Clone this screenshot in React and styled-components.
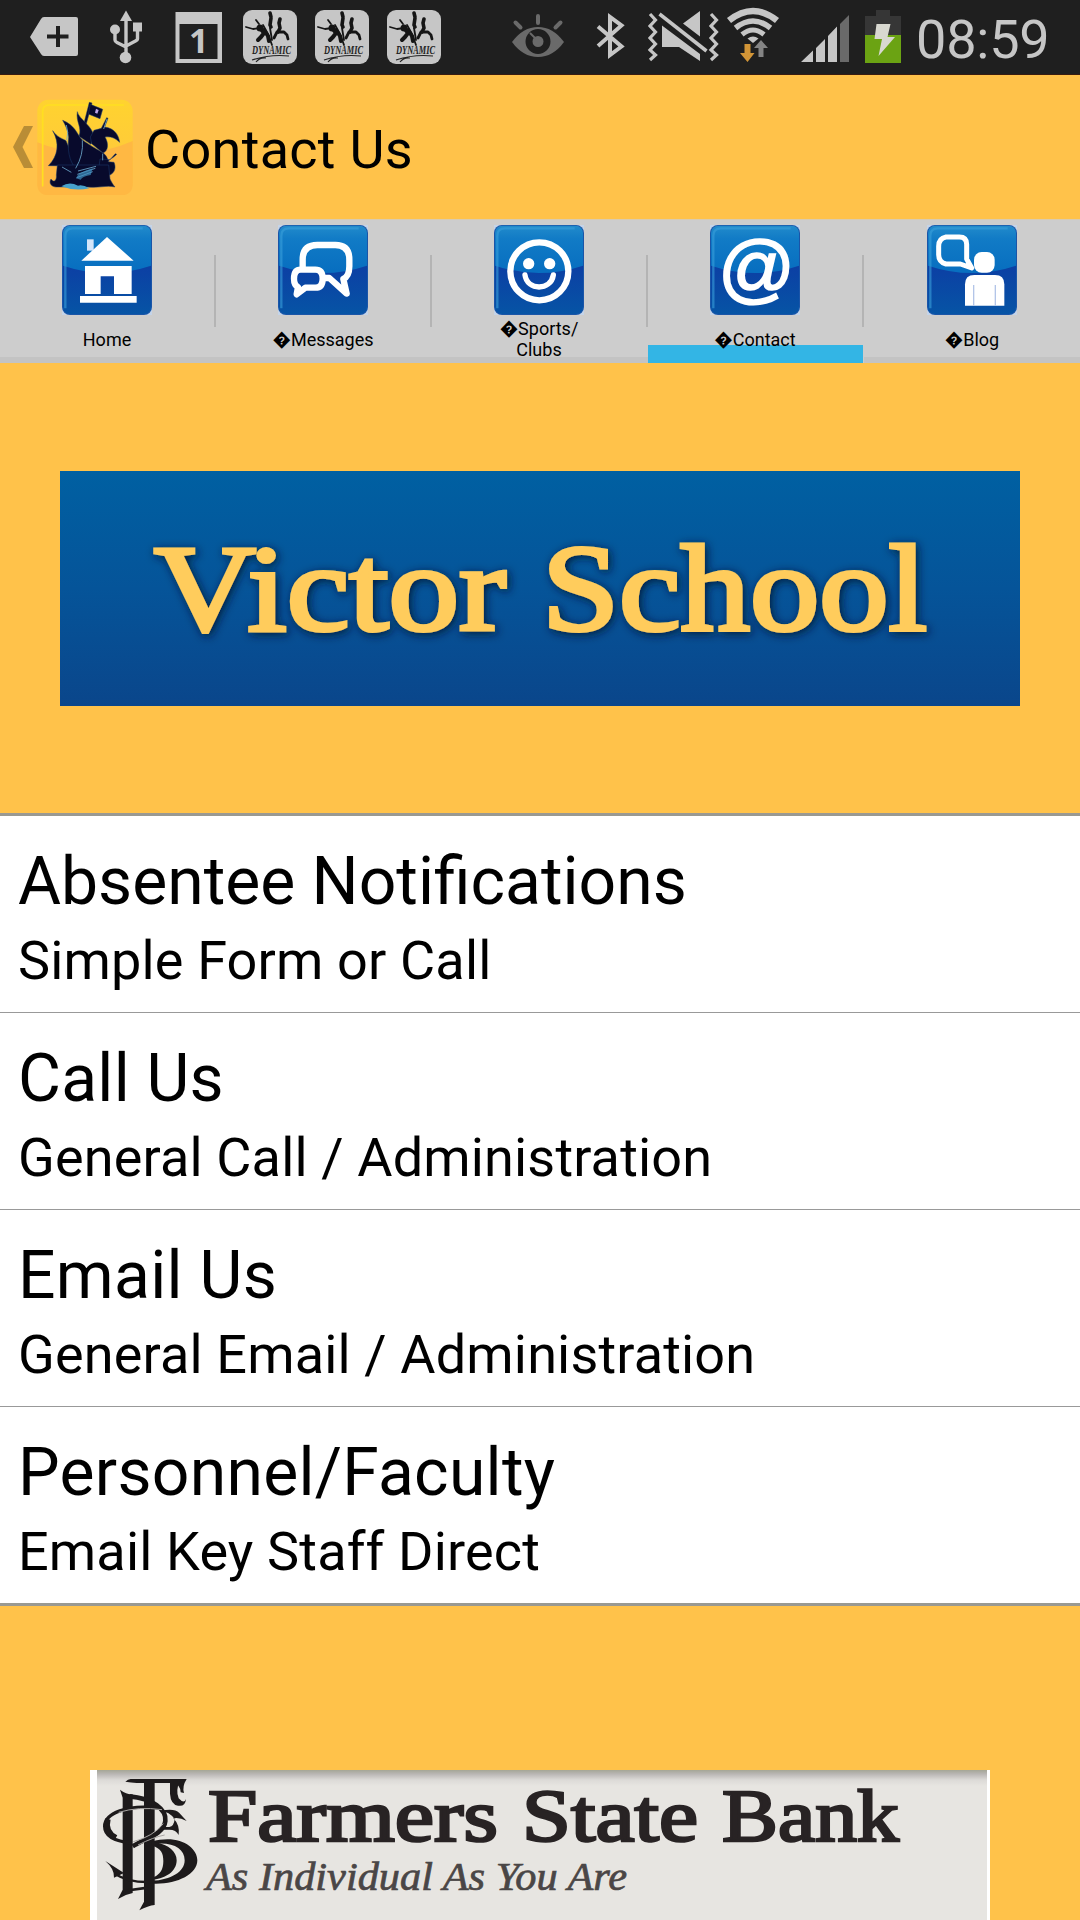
import React from "react";
import styled, { createGlobalStyle } from "styled-components";

const GlobalStyle = createGlobalStyle`
  * {
    box-sizing: border-box;
  }
  body {
    margin: 0;
    background: #ffc24a;
    font-family: Roboto, "Open Sans", sans-serif;
    color: #000;
  }
`;

const Screen = styled.div`
  width: 1080px;
  height: 1920px;
  overflow: hidden;
  display: flex;
  flex-direction: column;
  background: #ffc24a;
`;

const StatusBar = styled.header`
  height: 75px;
  flex: none;
  display: flex;
  justify-content: space-between;
  background: #1f1f1f;
  border-bottom: 1px solid #3a1c10;
`;

const StatusGroup = styled.div`
  display: flex;
  padding: ${(props) => props.$padding};
`;

const StatusIcon = styled.svg`
  display: block;
  overflow: visible;
  height: 74px;
  width: ${(props) => props.$width}px;
  margin-left: ${(props) => props.$gap || 0}px;
`;

const Clock = styled.span`
  width: 132px;
  margin-left: 15px;
  font-size: 54px;
  line-height: 79px;
  letter-spacing: -0.2px;
  white-space: nowrap;
  color: #c6c6c6;
`;

const ActionBar = styled.div`
  height: 144px;
  flex: none;
  display: flex;
  align-items: center;
  padding-left: 13px;
`;

const BackArrow = styled.svg`
  width: 20px;
  height: 42px;
  margin-right: 4px;
`;

const AppIcon = styled.svg`
  width: 96px;
  height: 96px;
  margin-right: 12px;
`;

const PageTitle = styled.h1`
  margin: 0;
  font-size: 54px;
  font-weight: 400;
  line-height: 64px;
  letter-spacing: 0.3px;
  padding-top: 5px;
`;

const TabBar = styled.nav`
  height: 144px;
  flex: none;
  display: grid;
  grid-template-columns: repeat(5, 216px);
  background: #cdcdcd;
  border-top: 1px solid #d9cbb0;
`;

const Tab = styled.div`
  height: 143px;
  display: flex;
  flex-direction: column;
  align-items: center;
  padding: 5px ${(props) => (props.$last ? 0 : 2)}px 0 0;
  background-image: ${(props) =>
      props.$active
        ? "linear-gradient(#33b5e5, #33b5e5)"
        : "linear-gradient(#c3c3c3, #c3c3c3)"},
    ${(props) =>
      props.$last ? "none" : "linear-gradient(#b4b4b4, #b4b4b4)"};
  background-repeat: no-repeat;
  background-size: ${(props) => (props.$active ? "215px 18px" : "100% 6px")},
    2px 72px;
  background-position: 0 100%, 214px 35px;
`;

const TabIcon = styled.svg`
  width: 90px;
  height: 90px;
  flex: none;
  overflow: visible;
`;

const TabLabel = styled.div`
  height: 48px;
  display: flex;
  align-items: center;
  text-align: center;
  font-size: 18px;
  line-height: 21px;
  white-space: pre-line;
`;

const BannerArea = styled.section`
  height: 450px;
  flex: none;
  display: flex;
  align-items: center;
  justify-content: center;
`;

const Banner = styled.svg`
  width: 960px;
  height: 235px;
  background: linear-gradient(#0060a2, #055499 50%, #0a468b);
`;

const List = styled.ul`
  margin: 0;
  padding: 0;
  flex: none;
  list-style: none;
  background: #fff;
  border-top: 3px solid #999992;
  border-bottom: 3px solid #999992;
`;

const ListItem = styled.li`
  height: 197px;
  padding: 27px 18px 0;
  border-bottom: 1px solid #999;

  &:last-child {
    height: 196px;
    border-bottom: none;
  }
`;

const ItemTitle = styled.div`
  font-size: 66px;
  line-height: 78px;
  letter-spacing: ${(props) => props.$spacing || "normal"};
`;

const ItemText = styled.div`
  font-size: 54px;
  line-height: 64px;
  letter-spacing: 0.16px;
  margin-top: 8px;
`;

const SponsorArea = styled.section`
  flex: 1;
  padding: 164px 90px 0;
`;

const Sponsor = styled.div`
  height: 150px;
  border-left: 7px solid #fff;
  border-right: 3px solid #fff;
  background: linear-gradient(
    #a5a696,
    #b9b6b4 4px,
    #dcdad7 10px,
    #e7e5e1 16px
  );
`;

const SponsorLogo = styled.svg`
  display: block;
  width: 890px;
  height: 150px;
`;

// the "fi" ligature is lost with any letter spacing, so the first title has none
const items = [
  { title: "Absentee Notifications", text: "Simple Form or Call" },
  { title: "Call Us", text: "General Call / Administration", spacing: "0.25px" },
  { title: "Email Us", text: "General Email / Administration", spacing: "0.3px" },
  { title: "Personnel/Faculty", text: "Email Key Staff Direct", spacing: "0.28px" },
];

const DynamicIcon = ({ gap }) => (
  <StatusIcon viewBox="0 0 54 74" $width={54} $gap={gap}>
    <rect y="10" width="54" height="54" rx="9" fill="#c6c6c6" />
    <g fill="none" stroke="#151515" strokeLinecap="round" strokeLinejoin="round">
      <path d="M3 27l7 2 7-1M13 20l3 4" strokeWidth="1.800" />
      <path d="M18 29l3 4-3 4-3 3M21 30l4 6 1 5" strokeWidth="4" />
      <path d="M20 25l5 9 4 11" strokeWidth="1.800" />
      <path d="M27 13l1 4M28 18l-1 7 1 2" strokeWidth="3.600" />
      <path d="M27 28l1 6 1 6" strokeWidth="1.800" />
      <path d="M37 19l-1 4 1 5-2 4" strokeWidth="3.600" />
      <path d="M35 32l6 0 3 3 1 4M34 32l-3 6" strokeWidth="2.800" />
    </g>
    <circle cx="17" cy="28" r="3.500" fill="#151515" />
    <text
      x="9"
      y="54"
      fontFamily="Liberation Serif"
      fontStyle="italic"
      fontWeight="700"
      fontSize="13"
      textLength="39"
      lengthAdjust="spacingAndGlyphs"
      fill="#222"
    >
      DYNAMIC
    </text>
    <path d="M9 60q18-6 37-4M13 62q4-5 10-4" fill="none" stroke="#222" strokeWidth="1.200" />
  </StatusIcon>
);

const LeftStatus = () => (
  <StatusGroup $padding="0 0 0 30px">
    <StatusIcon viewBox="30 0 48 74" $width={48}>
      <path d="M30 37L41 19q1-2 3-2h32q2 0 2 2v35q0 2-2 2H44q-2 0-3-2z" fill="#c6c6c6" />
      <path d="M47 36.500h21.500M58 26v21" stroke="#1f1f1f" strokeWidth="4" />
    </StatusIcon>
    <StatusIcon viewBox="109 0 34 74" $width={34} $gap={31}>
      <g fill="#c6c6c6">
        <path d="M126 10.500l6 10.500h-12z" />
        <circle cx="125.500" cy="57.500" r="5.800" />
        <circle cx="115" cy="29.500" r="5" />
        <rect x="133" y="22.500" width="9" height="9" />
      </g>
      <path
        d="M126 18v38M115 30v10q0 1.500 2 2.500l9 4.500M137.500 30v9q0 1-2 2L126 46"
        fill="none"
        stroke="#c6c6c6"
        strokeWidth="3.400"
      />
    </StatusIcon>
    <StatusIcon viewBox="175 0 47 74" $width={47} $gap={32}>
      <path d="M175.500 12h46.500v51h-46.500zM179.500 24v35h38V24z" fillRule="evenodd" fill="#c6c6c6" />
      <text x="189" y="53" fontFamily="Open Sans" fontWeight="700" fontSize="34" fill="#c6c6c6">
        1
      </text>
    </StatusIcon>
    <DynamicIcon gap={21} />
    <DynamicIcon gap={18} />
    <DynamicIcon gap={18} />
  </StatusGroup>
);

const RightStatus = () => (
  <StatusGroup $padding="0 32px 0 0">
    <StatusIcon viewBox="512 0 52 74" $width={52}>
      <path d="M512 42q11-15 26-15t26 15q-11 15-26 15t-26-15z" fill="#6a6a6a" />
      <circle cx="538" cy="41.500" r="9" fill="none" stroke="#1f1f1f" strokeWidth="7" />
      <path d="M530 33l6 6" stroke="#6a6a6a" strokeWidth="2" />
      <path d="M538 16v7M515.500 22.500l5 5M560.500 22.500l-5 5" stroke="#6a6a6a" strokeWidth="4" strokeLinecap="round" />
    </StatusIcon>
    <StatusIcon viewBox="595 0 31 74" $width={31} $gap={31}>
      <path
        d="M598 26.500l23.500 20-11.500 8.500V17l11.500 8.500L598 46"
        fill="none"
        stroke="#c6c6c6"
        strokeWidth="4"
      />
    </StatusIcon>
    <StatusIcon viewBox="647 0 72 74" $width={72} $gap={21}>
      <path
        d="M650 14l5.500 6-5.500 6 5.500 6-5.500 6 5.500 6-5.500 6 5.500 5-5.500 5M711 14l5.500 6-5.500 6 5.500 6-5.500 6 5.500 6-5.500 6 5.500 5-5.500 5"
        fill="none"
        stroke="#c6c6c6"
        strokeWidth="3.200"
      />
      <path d="M662 25.500V47h17l21 14v-7zM683 23.500L700 11v25.500z" fill="#c6c6c6" />
      <path d="M659.500 14l47 37" stroke="#c6c6c6" strokeWidth="3.500" />
    </StatusIcon>
    <StatusIcon viewBox="726 0 54 74" $width={54} $gap={7}>
      <g fill="none" stroke="#c6c6c6">
        <path d="M729 20.500q24-19 48 0" strokeWidth="6.500" />
        <path d="M735.500 28q17.500-14 35 0" strokeWidth="5.500" />
        <path d="M742 34.500q11-9 22 0" strokeWidth="5" />
      </g>
      <path d="M747.500 38.500q5.500-4 11 0L753 43z" fill="#c6c6c6" />
      <path d="M744.500 44h6v9h4l-7 9-7.500-9h4.500z" fill="#d29537" />
      <path d="M758.500 57h5v-9h4.500l-7-8-7 8h4.500z" fill="#848484" />
    </StatusIcon>
    <StatusIcon viewBox="801 0 49 74" $width={49} $gap={21}>
      <path d="M801 62l12-11.500V62zM816 62V48l9-9v23zM828 62V36l9-9.500V62z" fill="#c6c6c6" />
      <path d="M840 62V24l9-9v47z" fill="#6a6a6a" />
    </StatusIcon>
    <StatusIcon viewBox="865 0 36 74" $width={36} $gap={15}>
      <path d="M876 16v-6h14v6h11v19h-36V16z" fill="#363636" />
      <path d="M865 35h36v28h-36z" fill="#6ba313" />
      <path d="M876.500 24h14l-3 13h7.500L878.500 56l3.500-17h-7.500z" fill="#d8d8d0" />
    </StatusIcon>
    <Clock>08:59</Clock>
  </StatusGroup>
);

const ShipIcon = () => (
  <AppIcon viewBox="111 68 288 288">
    <defs>
      <linearGradient id="appTop" x1="0" y1="0" x2="0" y2="1">
        <stop offset="0" stopColor="#ffd32f" />
        <stop offset="0.6" stopColor="#ffca3a" />
        <stop offset="1" stopColor="#ffbd42" />
      </linearGradient>
    </defs>
    <rect x="112" y="70" width="286" height="286" rx="34" fill="url(#appTop)" />
    <path d="M112 198q143 60 286-4v128q0 34-34 34H146q-34 0-34-34z" fill="#ffb843" />
    <path d="M128 328V106q0-20 20-20h222" fill="none" stroke="#ffdf20" strokeWidth="5" strokeLinecap="round" />
    <g fill="#080a2c" stroke="#1d3f70" strokeWidth="1.500">
      <path d="M268 78l8 2-17 62-7-2z" />
      <path d="M271 84l37 15-8 28-35-14z" />
      <path d="M232 106c4 22 50 46 49 76l-8 22-36-24c10-28-10-42-5-74z" />
      <path d="M158 163c14 20 26 22 40 30 10 26 24 50 40 76l-93-1c30-30 34-68 13-105z" />
      <path d="M188 132c36 14 44 42 56 56 22 18 44 28 62 40 14 8 18 20 20 36l-98 14c-22-26-26-60-22-96-2-20-10-36-18-50z" />
      <path d="M282 162l22-6 16-32 4 2-10 26c32 4 42 26 45 46-14-14-28-18-44-16 12 20 10 42-6 48l-34-28-4-20z" />
      <path d="M350 234c-10 12-20 12-26 22l18 2c6 14 4 30-12 38l-34-16 4-32 30 2 16-18z" />
      <path d="M172 266h154l4 42c4 8 8 16 15 24-28-6-48 4-82 0h-90c-18 2-28-12-20-24 10 14 18 2 16-12z" />
    </g>
    <path d="M288 97l8 4-4 11-7-3z" fill="#bca5e9" />
    <g fill="none" stroke="#6da9ce" strokeWidth="2.500">
      <path d="M247 192q4 44-20 84M199 146q8 22 1 46M321 128l-10 30M308 232v20" />
      <path d="M186 272l28 16M234 284l54-14M232 294l54-18M230 304l48-18" />
    </g>
    <path d="M228 306q4-18 50-30l-6 20q-24 4-30 14z" fill="#3f8fc0" opacity="0.7" />
    <path d="M184 330q24-16 50-2 14-4 34 8-44 10-84-6z" fill="#48a2cb" />
  </AppIcon>
);

// Blue button face shared by all the tab icons
const BlueIcon = ({ children }) => (
  <TabIcon viewBox="0 0 270 270">
    <defs>
      <linearGradient id="face" x1="0" y1="0" x2="0" y2="1">
        <stop offset="0" stopColor="#228bcb" />
        <stop offset="0.15" stopColor="#117bc6" />
        <stop offset="0.5" stopColor="#086fc0" />
      </linearGradient>
      <linearGradient id="shade" x1="0" y1="0" x2="0" y2="1">
        <stop offset="0" stopColor="#0c3fa4" />
        <stop offset="1" stopColor="#0654a5" />
      </linearGradient>
    </defs>
    <rect width="270" height="270" fill="#c5d4e8" />
    <rect width="270" height="270" rx="24" fill="#1a55a8" />
    <rect x="3" y="2" width="264" height="264" rx="22" fill="url(#face)" />
    <path d="M3 122q132 44 264 0v122q0 23-23 23H26q-23 0-23-23z" fill="url(#shade)" />
    <path d="M10 250V32q0-22 22-22h210" fill="none" stroke="#3aa0db" strokeWidth="7" opacity="0.6" />
    {children}
  </TabIcon>
);

const HomeIcon = () => (
  <BlueIcon>
    <g fill="#fff">
      <path d="M75 43h20v34H75z" fill="#d5e6fa" />
      <path d="M58 107l77-71 80 71z" />
      <path d="M69 123h140v84h-53v-53h-40v53H69z" />
      <path d="M54 213h170v20H54z" />
    </g>
  </BlueIcon>
);

const MessagesIcon = () => (
  <BlueIcon>
    <g fill="none" stroke="#fff" strokeWidth="19" strokeLinejoin="round">
      <path d="M74 130v-26q0-44 44-44h54q42 0 42 44v20q0 30-18 38l10 44-52-47h-20" />
      <path d="M68 134h44q22 0 22 27t-22 27H82l-26 20 4-22q-12-6-12-25 0-27 20-27z" />
    </g>
  </BlueIcon>
);

const SportsIcon = () => (
  <BlueIcon>
    <circle cx="136" cy="139" r="87" fill="none" stroke="#fff" strokeWidth="19" />
    <circle cx="104" cy="116" r="17" fill="#fff" />
    <circle cx="167" cy="116" r="17" fill="#fff" />
    <path d="M93 150c6 48 78 48 85 0" fill="none" stroke="#fff" strokeWidth="16" strokeLinecap="round" />
  </BlueIcon>
);

const ContactIcon = () => (
  <BlueIcon>
    <text
      x="136"
      y="206"
      textAnchor="middle"
      fontFamily="Liberation Sans"
      fontStyle="italic"
      fontSize="228"
      fill="#fff"
      stroke="#fff"
      strokeWidth="5"
    >
      @
    </text>
  </BlueIcon>
);

const BlogIcon = () => (
  <BlueIcon>
    <path
      d="M57 36h40q22 0 22 22v44l15 27-34-12H57q-22-6-22-28V64q0-24 22-28z"
      fill="none"
      stroke="#fff"
      strokeWidth="15"
      strokeLinejoin="round"
    />
    <rect x="141" y="81" width="62" height="62" rx="23" fill="#fff" />
    <path d="M114 242v-64q0-28 28-28h62q28 0 28 28v64z" fill="#fff" />
    <path d="M140 180v62M205 180v62" stroke="#b3c5e8" strokeWidth="4" />
  </BlueIcon>
);

const tabs = [
  { label: "Home", Icon: HomeIcon },
  { label: "\uFFFDMessages", Icon: MessagesIcon },
  { label: "\uFFFDSports/\nClubs", Icon: SportsIcon },
  { label: "\uFFFDContact", Icon: ContactIcon, active: true },
  { label: "\uFFFDBlog", Icon: BlogIcon },
];

const bannerWords = [
  { word: "Victor", x: 94, width: 352 },
  { word: "School", x: 482, width: 385 },
];

const sponsorWords = [
  { word: "Farmers", x: 111, width: 290 },
  { word: "State", x: 425, width: 176 },
  { word: "Bank", x: 625, width: 177 },
];

// Interlaced F, S and B of the bank
const Monogram = () => (
  <g transform="translate(3 7) scale(0.33333) translate(-90 -110)">
    <g fill="#1d1a1b">
      <path d="M166 124q8-8 16-8h168q-14 22-8 42l-10-2q-2-26-24-28h-54v366q-20 2-46 16l14-26V128h-22q-16-2-34-4z" />
      <path d="M150 148q18 14 38 14v296q-22 4-44 18l14-28V172z" />
      <path d="M300 122h30q-14 28-4 52 16 18 22 2-2 24-24 20-22-4-24-36z" />
      <path d="M272 212q40-10 56 6l22 24q-22-12-40-8 20 20 16 50-8-16-28-16h-28l2-8h26q14-2 16-24-16-22-42-24z" />
      <path d="M244 304c80-24 138 14 138 56 0 44-66 74-136 70v-8c56-4 98-26 98-62 0-38-40-58-100-48z" />
      <path d="M258 306c38 8 62 28 62 54 0 34-34 54-68 58v-8c18-8 28-22 28-48 0-24-6-38-34-46z" />
      <path d="M106 362l56 36-30 14q2-26-26-50z" />
    </g>
    <g fill="none" stroke="#1d1a1b">
      <path d="M270 204C170 190 104 220 104 258c0 34 40 46 80 50" strokeWidth="10" />
      <path d="M114 236q-10 38 24 56" strokeWidth="16" />
      <path d="M178 168c70 6 112 40 108 74-4 40-60 52-98 76" strokeWidth="14" />
      <path d="M134 400q46 30 122 24" strokeWidth="7" />
      <path d="M160 452l74-10" strokeWidth="8" />
    </g>
    <path d="M146 216q60-18 130-8M190 304q60-16 90-54M204 314q48-24 80-30" fill="none" stroke="#aaa7a5" strokeWidth="3" />
  </g>
);

const App = () => {
  return (
    <>
      <GlobalStyle />
      <Screen>
        <StatusBar>
          <LeftStatus />
          <RightStatus />
        </StatusBar>

        <ActionBar>
          <BackArrow viewBox="0 0 20 42">
            <path d="M11 0h9L9.500 21 20 42h-9L0 21z" fill="#b98d36" />
          </BackArrow>
          <ShipIcon />
          <PageTitle>Contact Us</PageTitle>
        </ActionBar>

        <TabBar>
          {tabs.map(({ label, Icon, active }, index) => (
            <Tab key={label} $active={active} $last={index === tabs.length - 1}>
              <Icon />
              <TabLabel>{label}</TabLabel>
            </Tab>
          ))}
        </TabBar>

        <BannerArea>
          <Banner viewBox="0 0 960 235">
            <defs>
              <filter id="glow" x="-10%" y="-20%" width="120%" height="140%">
                <feDropShadow dx="2" dy="2" stdDeviation="5" floodColor="#001530" floodOpacity="0.9" />
              </filter>
            </defs>
            <g
              fontFamily="Liberation Serif"
              fontSize="123"
              fill="#ffcc5c"
              stroke="#ffcc5c"
              strokeWidth="4"
              filter="url(#glow)"
            >
              {bannerWords.map(({ word, x, width }) => (
                <text key={word} x={x} y="159" textLength={width} lengthAdjust="spacingAndGlyphs">
                  {word}
                </text>
              ))}
            </g>
          </Banner>
        </BannerArea>

        <List>
          {items.map((item) => (
            <ListItem key={item.title}>
              <ItemTitle $spacing={item.spacing}>{item.title}</ItemTitle>
              <ItemText>{item.text}</ItemText>
            </ListItem>
          ))}
        </List>

        <SponsorArea>
          <Sponsor>
            <SponsorLogo viewBox="0 0 890 150">
              <Monogram />
              <g
                fontFamily="Liberation Serif"
                fontSize="74"
                fill="#282324"
                stroke="#282324"
                strokeWidth="2.500"
              >
                {sponsorWords.map(({ word, x, width }) => (
                  <text key={word} x={x} y="71" textLength={width} lengthAdjust="spacingAndGlyphs">
                    {word}
                  </text>
                ))}
              </g>
              <text
                x="109"
                y="120"
                fontFamily="Liberation Serif"
                fontStyle="italic"
                fontSize="40"
                textLength="421"
                lengthAdjust="spacingAndGlyphs"
                fill="#4a4646"
                stroke="#4a4646"
                strokeWidth="0.7"
              >
                As Individual As You Are
              </text>
            </SponsorLogo>
          </Sponsor>
        </SponsorArea>
      </Screen>
    </>
  );
};

export default App;
